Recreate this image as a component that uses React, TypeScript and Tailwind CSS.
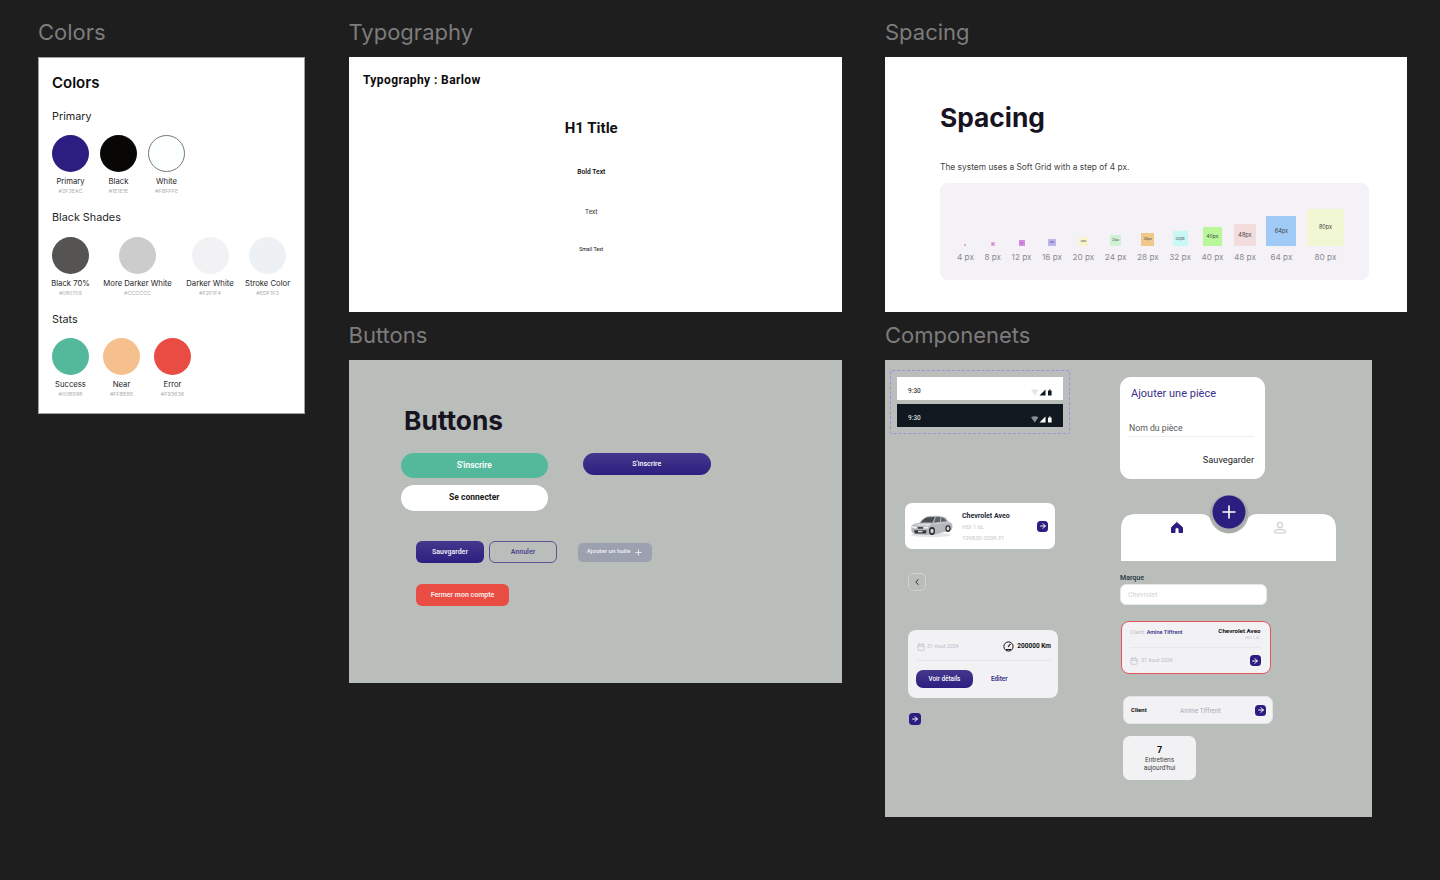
import { Calendar, ChevronLeft, Plus, ArrowRight } from 'lucide-react';

const poppins = "font-['Inter','Liberation_Sans',sans-serif]";
const barlow = "font-['Roboto','Liberation_Sans',sans-serif]";

const primary = [
  { name: 'Primary', hex: '#2F3EAC', color: 'bg-[#2c1e80]' },
  { name: 'Black', hex: '#1E1E1E', color: 'bg-[#080706]' },
  { name: 'White', hex: '#FBFFFE', color: 'bg-[#fbfffe] border border-[#777]' },
];
const shades = [
  { name: 'Black 70%', hex: '#080705', color: 'bg-[#565452]' },
  { name: 'More Darker White', hex: '#CCCCCC', color: 'bg-[#cccccc]' },
  { name: 'Darker White', hex: '#F2F1F4', color: 'bg-[#f2f2f4]' },
  { name: 'Stroke Color', hex: '#EDF1F3', color: 'bg-[#edf1f3]' },
];
const stats = [
  { name: 'Success', hex: '#00B998', color: 'bg-[#53b99a]' },
  { name: 'Near', hex: '#FFBE85', color: 'bg-[#f6c08e]' },
  { name: 'Error', hex: '#F93636', color: 'bg-[#e84c42]' },
];

const steps = [
  { label: '4 px', tag: '', box: 'w-[2px] h-[2px] bg-[#f3a6b6]', text: '' },
  { label: '8 px', tag: '8', box: 'w-[4px] h-[4px] bg-[#eab0e6]', text: 'text-[2px]' },
  { label: '12 px', tag: '12', box: 'w-[6px] h-[6px] bg-[#d68adf]', text: 'text-[2px]' },
  { label: '16 px', tag: '16px', box: 'w-[8px] h-[7px] bg-[#bdb4f2]', text: 'text-[2px]' },
  { label: '20 px', tag: '20px', box: 'w-[9px] h-[9px] bg-[#f8f3c8]', text: 'text-[2.5px]' },
  { label: '24 px', tag: '24px', box: 'w-[11px] h-[11px] bg-[#cff2d6]', text: 'text-[3px]' },
  { label: '28 px', tag: '28px', box: 'w-[13px] h-[13px] bg-[#f0c98a]', text: 'text-[3.5px]' },
  { label: '32 px', tag: '32px', box: 'w-[15px] h-[15px] bg-[#c9f7f4]', text: 'text-[4px]' },
  { label: '40 px', tag: '40px', box: 'w-[19px] h-[19px] bg-[#b9f79a]', text: 'text-[5px]' },
  { label: '48 px', tag: '48px', box: 'w-[22px] h-[22px] bg-[#f2dcdc]', text: 'text-[5.5px]' },
  { label: '64 px', tag: '64px', box: 'w-[30px] h-[30px] bg-[#a0cbf6]', text: 'text-[5.5px]' },
  { label: '80 px', tag: '80px', box: 'w-[37px] h-[37px] bg-[#f0f7d2]', text: 'text-[5.5px]' },
];

type Swatch = { name: string; hex: string; color: string };

function SwatchRow({ title, items, slots, top, gap }: { title: string; items: Swatch[]; slots: string[]; top: string; gap: string }) {
  return (
    <div className={top}>
      <p className="h-[14px] text-[10.8px] leading-[14px] text-[#1e1e1e]">{title}</p>
      <div className={`flex ${gap}`}>
        {items.map((s, i) => (
          <div key={s.name} className={`flex flex-col items-center ${slots[i]}`}>
            <div className={`h-[37px] w-[37px] rounded-full ${s.color}`} />
            <p className="mt-[5px] h-[10px] whitespace-nowrap text-[7.7px] leading-[10px] text-[#1e1e1e]">{s.name}</p>
            <p className="h-[9px] whitespace-nowrap text-[5.4px] leading-[9px] text-[#b0b0b0]">{s.hex}</p>
          </div>
        ))}
      </div>
    </div>
  );
}

function ArrowChip({ size = 'h-[12px] w-[12px]' }: { size?: string }) {
  return (
    <span className={`flex items-center justify-center rounded-[3.5px] bg-[#2c1e80] ${size}`}>
      <ArrowRight className="h-[8px] w-[8px] text-white" strokeWidth={3} />
    </span>
  );
}

function StatusBar({ dark }: { dark?: boolean }) {
  const fg = dark ? '#ffffff' : '#101820';
  const faint = dark ? '#8a8d90' : '#e6e6e8';
  return (
    <div className={`flex h-[23px] items-center justify-between pl-[11px] pr-[10px] pt-[7px] ${barlow} ${dark ? 'bg-[#101820]' : 'bg-white'}`}>
      <span className={`text-[6.5px] font-medium ${dark ? 'text-[#d8d8d8]' : 'text-[#444]'}`}>9:30</span>
      <svg width="22" height="7" viewBox="0 0 22 7">
        <path d="M0 1.2 C2.2 -0.2 5.3 -0.2 7.5 1.2 L3.75 6.5 Z" fill={faint} />
        <path d="M8.5 6.5 L14.5 0.6 V6.5 Z" fill={fg} />
        <rect x="17" y="1.4" width="3.6" height="5.1" rx="0.5" fill={fg} />
        <rect x="18" y="0.5" width="1.6" height="1" fill={fg} />
      </svg>
    </div>
  );
}

function Car() {
  return (
    <svg width="42" height="23" viewBox="0 0 42 23">
      <ellipse cx="20" cy="20" rx="20" ry="2.2" fill="#e4e4e4" />
      {/* body */}
      <path d="M0.5 11 C1 9.6 4 8.4 8.5 7.8 C11 4.5 14 1.6 19 1 C25 0.4 31 0.8 34.5 2.4 L37.5 6.5 C40 7.4 41.5 9 41.5 11 L41 14.5 L39 15.5 L24 19.4 L17 20 L4 19.2 C1.5 18.4 0.5 17 0.3 15 Z" fill="#b4b6ba" />
      {/* windscreen and side glass */}
      <path d="M9.5 7.7 C11.5 5 13.6 3 16.5 2.2 L24 2 L21.5 7.6 C17 7.4 13 7.4 9.5 7.7 Z" fill="#4a4e54" />
      <path d="M25 2 L29.5 2 L29 6.8 L23 7.4 Z" fill="#5b6066" />
      <path d="M30.5 2.2 C32.5 2.6 34 3.6 35.5 6.2 L30 6.7 Z" fill="#5b6066" />
      {/* bonnet highlight */}
      <path d="M3 10 C8 8.6 15 8.4 21 8.6 L18 11 C13 10.6 8 10.8 3 10 Z" fill="#dcdde0" />
      <path d="M22 9 L39 7.5" stroke="#d6d7da" strokeWidth="0.7" />
      {/* headlights and grille */}
      <path d="M1 11 L6 11.8 L6 13.4 L1.2 13 Z" fill="#eceded" />
      <path d="M12.5 12 L17.5 11.6 L17 13.4 L12.5 13.6 Z" fill="#eceded" />
      <path d="M6.8 12 H12 V13.8 H6.8 Z" fill="#44474c" />
      <path d="M3 15.2 H15.5 L15 18.6 H4 Z" fill="#34373b" />
      <rect x="7" y="15.8" width="4.5" height="1.5" fill="#d8d9db" />
      {/* wheels */}
      <ellipse cx="21" cy="16" rx="3" ry="3.9" fill="#26282b" />
      <ellipse cx="21" cy="16" rx="1.7" ry="2.3" fill="#d3d4d6" />
      <ellipse cx="37" cy="13.6" rx="2.6" ry="3.4" fill="#26282b" />
      <ellipse cx="37" cy="13.6" rx="1.4" ry="2" fill="#d3d4d6" />
    </svg>
  );
}

function NavBar() {
  return (
    <svg width="215" height="66" viewBox="0 0 215 66" className="block">
      <path d="M0 66 V34 Q0 19 15 19 H80 C86 19 90 23 93 28 C97 34 101 38 108 38 C115 38 119 34 123 28 C126 23 130 19 136 19 H200 Q215 19 215 34 V66 Z" fill="#ffffff" />
      <circle cx="108" cy="19" r="19.5" fill="#a6aaa7" opacity="0.85" />
      <circle cx="108" cy="17" r="16.5" fill="#2c1e80" />
      <path d="M108 11 V23 M102 17 H114" stroke="#ffffff" strokeWidth="1.6" strokeLinecap="round" />
      <path d="M50.5 37 V32.5 L55.8 27.5 L61.5 32.5 V37.5 H58 V34.5 C58 32 54 32 54 34.5 V37.5 H50.5 Z" fill="#2c1e80" stroke="#2c1e80" strokeLinejoin="round" />
      <circle cx="159" cy="30" r="2.6" fill="none" stroke="#cfd0d2" strokeWidth="1.2" />
      <path d="M153.6 37 C153.6 33.6 164.4 33.6 164.4 37 C164.4 37.7 163.9 38 163.4 38 H154.6 C154.1 38 153.6 37.7 153.6 37 Z" fill="none" stroke="#cfd0d2" strokeWidth="1.2" />
    </svg>
  );
}

function Gauge() {
  return (
    <svg width="11" height="11" viewBox="0 0 11 11">
      <circle cx="5.5" cy="5.5" r="4.6" fill="none" stroke="#111" strokeWidth="1" />
      <path d="M5 6 L7.4 2.8" stroke="#111" strokeWidth="1.1" />
      <path d="M3 8.6 H8" stroke="#111" strokeWidth="1.1" />
    </svg>
  );
}

export default function App() {
  return (
    <div className={`flex h-[880px] w-[1440px] overflow-hidden bg-[#1e1e1e] pl-[38px] ${poppins}`}>
      {/* Colors */}
      <div className="w-[267px]">
        <h2 className="h-[57px] pt-[17px] text-[22px] leading-[30px] text-[#7c7c7c]">Colors</h2>
        <div className="h-[357px] border border-[#a0a0a0] bg-white pl-[13px] pr-[6px]">
          <p className="mt-[15px] h-[20px] text-[15px] font-semibold leading-[20px] text-[#0b0b0b]">Colors</p>
          <SwatchRow title="Primary" items={primary} slots={['w-[37px]', 'ml-[11px] w-[37px]', 'ml-[11px] w-[37px]']} top="mt-[17px]" gap="mt-[11px]" />
          <SwatchRow title="Black Shades" items={shades} slots={['w-[37px]', 'ml-[14px] w-[69px]', 'ml-[14px] w-[48px]', 'ml-[11px] w-[45px]']} top="mt-[15px]" gap="mt-[12px]" />
          <SwatchRow title="Stats" items={stats} slots={['w-[37px]', 'ml-[14px] w-[37px]', 'ml-[14px] w-[37px]']} top="mt-[15px]" gap="mt-[11px]" />
        </div>
      </div>

      <div className="ml-[43.5px] w-[493.5px]">
        {/* Typography */}
        <h2 className="h-[57px] pt-[17px] text-[22px] leading-[30px] text-[#7c7c7c]">Typography</h2>
        <div className={`h-[255px] bg-white ${barlow}`}>
          <p className="pl-[14.5px] pt-[15px] text-[12px] font-bold leading-[17px] tracking-[0.4px] text-[#0b0b0b]">Typography : Barlow</p>
          <div className="ml-[-8px] flex flex-col items-center text-[#111]">
            <p className="mt-[29px] h-[20px] text-[15px] font-bold leading-[20px]">H1 Title</p>
            <p className="mt-[29px] h-[10px] text-[6.7px] font-semibold leading-[10px]">Bold Text</p>
            <p className="mt-[29.5px] h-[10px] text-[6.5px] leading-[10px] text-[#333]">Text</p>
            <p className="mt-[28px] h-[8px] text-[5.2px] leading-[8px]">Small Text</p>
          </div>
        </div>

        {/* Buttons */}
        <h2 className="mt-[8px] h-[40px] text-[22px] leading-[30px] text-[#7c7c7c]">Buttons</h2>
        <div className={`h-[323px] bg-[#babebb] pl-[52px] ${barlow}`}>
          <p className={`ml-[3.5px] pt-[45.5px] text-[26.3px] font-bold leading-[30px] text-[#17131f] ${poppins}`}>Buttons</p>
          <div className="mt-[17px] flex items-start">
            <div className="flex w-[147.5px] flex-col gap-[7px]">
              <button className="h-[25.5px] rounded-full bg-[#53b99a] text-[8.5px] font-semibold text-white">S'inscrire</button>
              <button className="h-[25.5px] rounded-full bg-white text-[8.5px] font-bold text-[#1a1a1a]">Se connecter</button>
            </div>
            <button className="ml-[34.5px] h-[22.5px] w-[128.5px] rounded-full bg-gradient-to-b from-[#44378c] to-[#2c1e80] text-[7px] font-medium text-white">S'inscrire</button>
          </div>
          <div className="ml-[15.5px] mt-[30.5px] flex items-center">
            <button className="h-[22px] w-[68px] rounded-[6px] bg-gradient-to-b from-[#44378c] to-[#2c1e80] text-[7px] font-semibold text-[#ececf4]">Sauvgarder</button>
            <button className="ml-[5px] h-[22px] w-[68px] rounded-[6px] border border-[#5b5296] text-[7px] font-semibold text-[#4d4390]">Annuler</button>
            <button className="ml-[21px] flex h-[19px] w-[74px] items-center justify-center gap-[4px] rounded-[5px] bg-[#9ba1af] text-[6.2px] font-medium text-[#f1f1f4]">
              Ajouter un huile
              <Plus className="h-[9px] w-[9px]" strokeWidth={2.4} />
            </button>
          </div>
          <button className="ml-[15.5px] mt-[21px] h-[22px] w-[93px] rounded-[6px] bg-[#e84c42] text-[7px] font-semibold text-[#fbeceb]">Fermer mon compte</button>
        </div>
      </div>

      <div className="ml-[43px] flex-1">
        {/* Spacing */}
        <h2 className="h-[57px] pt-[17px] text-[22px] leading-[30px] text-[#7c7c7c]">Spacing</h2>
        <div className="h-[255px] w-[522px] bg-white pl-[55px]">
          <p className="pt-[43px] text-[26.3px] font-bold leading-[36px] text-[#17131f]">Spacing</p>
          <p className="mt-[25px] h-[12px] text-[8.4px] leading-[12px] text-[#444]">The system uses a Soft Grid with a step of 4 px.</p>
          <div className="mt-[10px] flex h-[97px] w-[429px] items-end gap-[10.5px] rounded-[8px] bg-[#f4f2f7] pb-[17px] pl-[17px]">
            {steps.map((s) => (
              <div key={s.label} className="flex flex-col items-center">
                <div className={`flex items-center justify-center text-[#444] ${s.box} ${s.text}`}>{s.tag}</div>
                <p className="mt-[6px] h-[11px] whitespace-nowrap text-[8.2px] leading-[11px] text-[#8a8a92]">{s.label}</p>
              </div>
            ))}
          </div>
        </div>

        {/* Components */}
        <h2 className="mt-[8px] h-[40px] text-[22px] leading-[30px] text-[#7c7c7c]">Componenets</h2>
        <div className={`grid h-[457px] w-[487px] grid-cols-[235px_1fr] bg-[#babebb] ${barlow}`}>
          <div>
            <div className="ml-[4.5px] mt-[10px] flex h-[64px] w-[180.5px] flex-col gap-[4px] rounded-[2px] border border-dashed border-[#a58be0] px-[6.5px] py-[6px]">
              <StatusBar />
              <StatusBar dark />
            </div>

            <div className="ml-[20px] mt-[69px] flex h-[46px] w-[150px] items-center rounded-[7px] bg-white pl-[6px] pr-[7px]">
              <Car />
              <div className="ml-[9px] flex-1 pt-[2px]">
                <p className="text-[7px] font-bold leading-[11px] text-[#1d2a36]">Chevrolet Aveo</p>
                <p className="text-[5.8px] leading-[11px] text-[#c5c7cc]">HDI 1.6L</p>
                <p className="text-[5.8px] leading-[11px] text-[#c5c7cc]">109830-2008-31</p>
              </div>
              <ArrowChip size="h-[11px] w-[11px]" />
            </div>

            <div className="ml-[23px] mt-[24px] flex h-[18px] w-[18px] items-center justify-center rounded-[5px] border border-[#cfd2cf]">
              <ChevronLeft className="h-[10px] w-[10px] text-[#111]" strokeWidth={2} />
            </div>

            <div className="ml-[23px] mt-[39px] h-[68px] w-[150px] rounded-[8px] bg-[#f2f2f4] pl-[9px] pr-[7px]">
              <div className="flex h-[31px] items-center justify-between border-b border-[#e6e6ea] pt-[3px]">
                <div className="flex items-center gap-[2px]">
                  <Calendar className="h-[8px] w-[8px] text-[#b8bcc8]" strokeWidth={2} />
                  <span className="text-[5.3px] text-[#b8bcc8]">31 Aout 2024</span>
                </div>
                <div className="flex items-center gap-[3px]">
                  <Gauge />
                  <span className="text-[6.5px] font-bold text-[#111]">200000 Km</span>
                </div>
              </div>
              <div className="mt-[9px] flex items-center">
                <button className="-ml-[1px] h-[18px] w-[57px] rounded-[7px] bg-gradient-to-b from-[#44378c] to-[#2c1e80] pt-[1px] text-[6.3px] font-medium text-white">Voir détails</button>
                <span className="ml-[18px] pt-[1.5px] text-[6.3px] font-bold text-[#44378c]">Editer</span>
              </div>
            </div>

            <div className="ml-[24px] mt-[15px]">
              <ArrowChip size="h-[12px] w-[12px]" />
            </div>
          </div>

          <div>
            <div className="mt-[17px] h-[102px] w-[145px] rounded-[11px] bg-white pl-[9px] pr-[11px]">
              <p className="ml-[2px] pt-[10px] text-[11px] leading-[14px] text-[#3c2f8c]">Ajouter une pièce</p>
              <p className="mt-[21px] h-[15px] border-b border-[#eceef0] text-[8.7px] leading-[13px] text-[#555]">Nom du pièce</p>
              <p className="mt-[17px] text-right text-[9.2px] leading-[12px] text-[#222]">Sauvegarder</p>
            </div>

            <div className="ml-[1px] mt-[16px]">
              <NavBar />
            </div>

            <p className="mt-[11.5px] h-[9.5px] text-[7px] font-semibold leading-[10px] text-[#2d3c46]">Marque</p>
            <div className="mt-[2px] flex h-[21px] w-[147px] items-center rounded-[6px] border border-[#e6e8e8] bg-white pl-[7px] pt-[1px] text-[7px] text-[#d2d2d5]">Chevrolet</div>

            <div className="ml-[1px] mt-[16px] h-[53px] w-[150px] rounded-[8px] border-[1.5px] border-[#e0575a] bg-[#f2f2f4] pl-[8px] pr-[9.5px]">
              <div className="flex h-[26px] items-start justify-between border-b border-[#e8e8ec] pt-[6px]">
                <p className="text-[5.5px] leading-[8px] text-[#b8bcc8]">
                  Client: <span className="font-semibold text-[#44378c]">Amine Tiffrent</span>
                </p>
                <div className="text-right">
                  <p className="text-[6.2px] font-bold leading-[7px] text-[#111]">Chevrolet Aveo</p>
                  <p className="text-[4px] leading-[5px] text-[#c5c7cc]">HDI 1.6L</p>
                </div>
              </div>
              <div className="flex h-[25px] items-center justify-between">
                <div className="flex items-center gap-[3px]">
                  <Calendar className="h-[8px] w-[8px] text-[#b8bcc8]" strokeWidth={2} />
                  <span className="text-[5.3px] text-[#b8bcc8]">31 Aout 2024</span>
                </div>
                <ArrowChip size="h-[11px] w-[11px]" />
              </div>
            </div>

            <div className="ml-[3px] mt-[22px] flex h-[28px] w-[150px] items-center rounded-[7px] border border-[#e4e4e8] bg-[#f2f2f4] pl-[7px] pr-[6px]">
              <span className="w-[49px] text-[6px] font-bold leading-[10px] text-[#111]">Client</span>
              <span className="flex-1 pt-[2px] text-[6.4px] leading-[10px] text-[#a8abb8]">Amine Tiffrent</span>
              <ArrowChip size="h-[11px] w-[11px]" />
            </div>

            <div className="ml-[3px] mt-[12px] flex h-[44px] w-[73px] flex-col items-center justify-center rounded-[7px] bg-[#f2f2f4] pt-[1px] text-center">
              <p className="text-[9px] font-bold leading-[11px] text-[#111]">7</p>
              <p className="mt-[1px] text-[6.5px] leading-[7.5px] text-[#444]">Entretiens<br />aujourd'hui</p>
            </div>
          </div>
        </div>
      </div>
    </div>
  );
}
